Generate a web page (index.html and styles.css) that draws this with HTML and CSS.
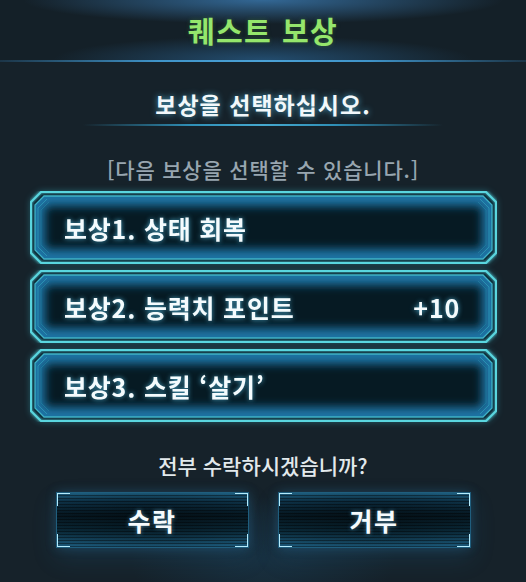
FILE: index.html
```html
<!DOCTYPE html>
<html lang="ko">
<head>
<meta charset="utf-8">
<title>퀘스트 보상</title>
<link rel="stylesheet" href="styles.css">
</head>
<body>
<div class="panel">
  <header class="header"><h1 class="title">퀘스트 보상</h1></header>
  <div class="hline"></div>
  <h2 class="prompt">보상을 선택하십시오.</h2>
  <div class="pline"></div>
  <p class="sub">[다음 보상을 선택할 수 있습니다.]</p>
  <ul class="rewards">
    <li class="reward">
      <svg class="frame" width="467" height="73" viewBox="0 0 467 73">
        <defs>
          <clipPath id="c1"><polygon points="14,5 453,5 462,14 462,59 453,68 14,68 5,59 5,14"/></clipPath>
          <filter id="b1" x="-10%" y="-50%" width="120%" height="200%"><feGaussianBlur stdDeviation="5"/></filter>
          <filter id="g1" x="-5%" y="-30%" width="110%" height="160%"><feGaussianBlur stdDeviation="1.6" result="b"/><feMerge><feMergeNode in="b"/><feMergeNode in="SourceGraphic"/></feMerge></filter>
        </defs>
        <polygon points="11,1 456,1 466,11 466,62 456,72 11,72 1,62 1,11" fill="#0a2633"/>
        <polygon points="14,5 453,5 462,14 462,59 453,68 14,68 5,59 5,14" fill="#061a23"/>
        <g clip-path="url(#c1)"><polygon points="14,5 453,5 462,14 462,59 453,68 14,68 5,59 5,14" fill="none" stroke="#1a73a4" stroke-width="20" filter="url(#b1)"/></g>
        <polygon points="11,1 456,1 466,11 466,62 456,72 11,72 1,62 1,11" fill="none" stroke="#5ad6df" stroke-width="2" filter="url(#g1)"/>
        <polygon points="14,5 453,5 462,14 462,59 453,68 14,68 5,59 5,14" fill="none" stroke="#3fb2c6" stroke-width="1.3"/>
        <path d="M17,8 L8,17 L8,56 L17,65 M450,8 L459,17 L459,56 L450,65" fill="none" stroke="#2f9cb8" stroke-width="1" opacity=".75"/>
        <path d="M19,11 L11,19 L11,54 L19,62 M448,11 L456,19 L456,54 L448,62" fill="none" stroke="#2a8aa8" stroke-width="1" opacity=".5"/>
      </svg>
      <span class="label">보상1. 상태 회복</span>
    </li>
    <li class="reward">
      <svg class="frame" width="467" height="73" viewBox="0 0 467 73">
        <defs>
          <clipPath id="c2"><polygon points="14,5 453,5 462,14 462,59 453,68 14,68 5,59 5,14"/></clipPath>
          <filter id="b2" x="-10%" y="-50%" width="120%" height="200%"><feGaussianBlur stdDeviation="5"/></filter>
          <filter id="g2" x="-5%" y="-30%" width="110%" height="160%"><feGaussianBlur stdDeviation="1.6" result="b"/><feMerge><feMergeNode in="b"/><feMergeNode in="SourceGraphic"/></feMerge></filter>
        </defs>
        <polygon points="11,1 456,1 466,11 466,62 456,72 11,72 1,62 1,11" fill="#0a2633"/>
        <polygon points="14,5 453,5 462,14 462,59 453,68 14,68 5,59 5,14" fill="#061a23"/>
        <g clip-path="url(#c2)"><polygon points="14,5 453,5 462,14 462,59 453,68 14,68 5,59 5,14" fill="none" stroke="#1a73a4" stroke-width="20" filter="url(#b2)"/></g>
        <polygon points="11,1 456,1 466,11 466,62 456,72 11,72 1,62 1,11" fill="none" stroke="#5ad6df" stroke-width="2" filter="url(#g2)"/>
        <polygon points="14,5 453,5 462,14 462,59 453,68 14,68 5,59 5,14" fill="none" stroke="#3fb2c6" stroke-width="1.3"/>
        <path d="M17,8 L8,17 L8,56 L17,65 M450,8 L459,17 L459,56 L450,65" fill="none" stroke="#2f9cb8" stroke-width="1" opacity=".75"/>
        <path d="M19,11 L11,19 L11,54 L19,62 M448,11 L456,19 L456,54 L448,62" fill="none" stroke="#2a8aa8" stroke-width="1" opacity=".5"/>
      </svg>
      <span class="label">보상2. 능력치 포인트</span>
      <span class="value">+10</span>
    </li>
    <li class="reward">
      <svg class="frame" width="467" height="73" viewBox="0 0 467 73">
        <defs>
          <clipPath id="c3"><polygon points="14,5 453,5 462,14 462,59 453,68 14,68 5,59 5,14"/></clipPath>
          <filter id="b3" x="-10%" y="-50%" width="120%" height="200%"><feGaussianBlur stdDeviation="5"/></filter>
          <filter id="g3" x="-5%" y="-30%" width="110%" height="160%"><feGaussianBlur stdDeviation="1.6" result="b"/><feMerge><feMergeNode in="b"/><feMergeNode in="SourceGraphic"/></feMerge></filter>
        </defs>
        <polygon points="11,1 456,1 466,11 466,62 456,72 11,72 1,62 1,11" fill="#0a2633"/>
        <polygon points="14,5 453,5 462,14 462,59 453,68 14,68 5,59 5,14" fill="#061a23"/>
        <g clip-path="url(#c3)"><polygon points="14,5 453,5 462,14 462,59 453,68 14,68 5,59 5,14" fill="none" stroke="#1a73a4" stroke-width="20" filter="url(#b3)"/></g>
        <polygon points="11,1 456,1 466,11 466,62 456,72 11,72 1,62 1,11" fill="none" stroke="#5ad6df" stroke-width="2" filter="url(#g3)"/>
        <polygon points="14,5 453,5 462,14 462,59 453,68 14,68 5,59 5,14" fill="none" stroke="#3fb2c6" stroke-width="1.3"/>
        <path d="M17,8 L8,17 L8,56 L17,65 M450,8 L459,17 L459,56 L450,65" fill="none" stroke="#2f9cb8" stroke-width="1" opacity=".75"/>
        <path d="M19,11 L11,19 L11,54 L19,62 M448,11 L456,19 L456,54 L448,62" fill="none" stroke="#2a8aa8" stroke-width="1" opacity=".5"/>
      </svg>
      <span class="label">보상3. 스킬 ‘살기’</span>
    </li>
  </ul>
  <p class="question">전부 수락하시겠습니까?</p>
  <div class="actions">
    <button class="btn">수락</button>
    <button class="btn">거부</button>
  </div>
</div>
</body>
</html>
```
FILE: styles.css
```css
html, body {
  margin: 0;
  padding: 0;
  background: #16222a;
}
body {
  width: 526px;
  height: 582px;
  overflow: hidden;
  font-family: "Noto Sans CJK KR", "Noto Sans", sans-serif;
}
.panel {
  display: flex;
  flex-direction: column;
  align-items: center;
  width: 526px;
  height: 582px;
  background:
    radial-gradient(ellipse 190px 90px at 50% 560px, rgba(30, 90, 130, 0.25), rgba(0,0,0,0) 70%),
    #16222a;
}
.header {
  width: 100%;
  height: 60px;
  display: flex;
  align-items: center;
  justify-content: center;
  background:
    radial-gradient(ellipse 240px 24px at 50% 0, rgba(56, 116, 168, 0.85), rgba(0,0,0,0) 100%),
    radial-gradient(ellipse 210px 24px at 50% 60px, rgba(42, 100, 148, 0.65), rgba(0,0,0,0) 100%),
    #142028;
}
.title {
  margin: 0;
  font-size: 29px;
  font-weight: 700;
  line-height: 36px;
  color: #95e66c;
  letter-spacing: 1.5px;
  text-shadow: 0 0 4px rgba(80, 160, 60, 0.35);
}
.hline {
  width: 100%;
  height: 2px;
  background: linear-gradient(to right, rgba(50,130,190,0.2), #3f94c9 30%, #4ba2d6 50%, #3f94c9 70%, rgba(50,130,190,0.2));
}
.prompt {
  margin: 27px 0 0;
  font-size: 23px;
  line-height: 30px;
  font-weight: 700;
  letter-spacing: 1px;
  color: #f2f8fa;
  text-shadow: 0 0 6px rgba(90, 200, 240, 0.75);
}
.pline {
  margin-top: 5px;
  width: 360px;
  height: 2px;
  background: linear-gradient(to right, rgba(40,140,180,0), #2f8fb6 30%, #46a9cf 50%, #2f8fb6 70%, rgba(40,140,180,0));
}
.sub {
  margin: 30px 0 0;
  font-size: 21px;
  line-height: 26px;
  font-weight: 500;
  letter-spacing: 0.8px;
  color: #98a6b0;
}
.rewards {
  list-style: none;
  margin: 9px 0 0;
  padding: 0;
  display: flex;
  flex-direction: column;
  gap: 6px;
  width: 467px;
  align-self: flex-start;
  margin-left: 30px;
}
.reward {
  display: grid;
  grid-template-columns: 1fr auto;
  grid-template-rows: 73px;
  align-items: center;
  filter: drop-shadow(0 0 3px rgba(60, 200, 220, 0.35));
}
.frame {
  grid-area: 1 / 1 / 2 / 3;
  display: block;
}
.label, .value {
  grid-row: 1;
  font-size: 25px;
  font-weight: 700;
  letter-spacing: 0.8px;
  color: #f4fbfd;
  line-height: 30px;
  text-shadow: 0 0 5px rgba(90, 200, 240, 0.8);
  position: relative;
}
.label {
  grid-column: 1;
  padding-left: 34px;
}
.value {
  grid-column: 2;
  padding-right: 37px;
}
.question {
  margin: 30px 0 0;
  font-size: 21px;
  line-height: 26px;
  font-weight: 500;
  letter-spacing: 0;
  color: #e2e9ec;
}
.actions {
  margin-top: 14px;
  display: flex;
  gap: 29px;
  justify-content: center;
}
.btn {
  width: 193px;
  height: 56px;
  box-sizing: border-box;
  border: 1px solid #1f5e7e;
  padding: 0;
  font-family: inherit;
  font-size: 25px;
  font-weight: 700;
  letter-spacing: 1.5px;
  color: #f6fbfd;
  text-shadow: 0 0 4px rgba(120, 200, 240, 0.6);
  background:
    linear-gradient(#b4eafb, #b4eafb) left top / 14px 2px no-repeat border-box,
    linear-gradient(#b4eafb, #b4eafb) left top / 2px 14px no-repeat border-box,
    linear-gradient(#b4eafb, #b4eafb) right top / 14px 2px no-repeat border-box,
    linear-gradient(#b4eafb, #b4eafb) right top / 2px 14px no-repeat border-box,
    linear-gradient(#b4eafb, #b4eafb) left bottom / 14px 2px no-repeat border-box,
    linear-gradient(#b4eafb, #b4eafb) left bottom / 2px 14px no-repeat border-box,
    linear-gradient(#b4eafb, #b4eafb) right bottom / 14px 2px no-repeat border-box,
    linear-gradient(#b4eafb, #b4eafb) right bottom / 2px 14px no-repeat border-box,
    repeating-linear-gradient(to bottom, rgba(0,0,0,0.4) 0 1px, rgba(0,0,0,0) 1px 3px) border-box,
    radial-gradient(ellipse 60% 60% at 50% 50%, rgba(0,0,0,0.35), rgba(0,0,0,0)) border-box,
    linear-gradient(to bottom, #1f6284, #0d3248 16%, #061822 42%, #0a2a3a 70%, #1d5c7e) border-box;
  box-shadow: 0 0 10px rgba(60, 150, 210, 0.25), 0 10px 24px rgba(30, 110, 160, 0.2);
}
```
